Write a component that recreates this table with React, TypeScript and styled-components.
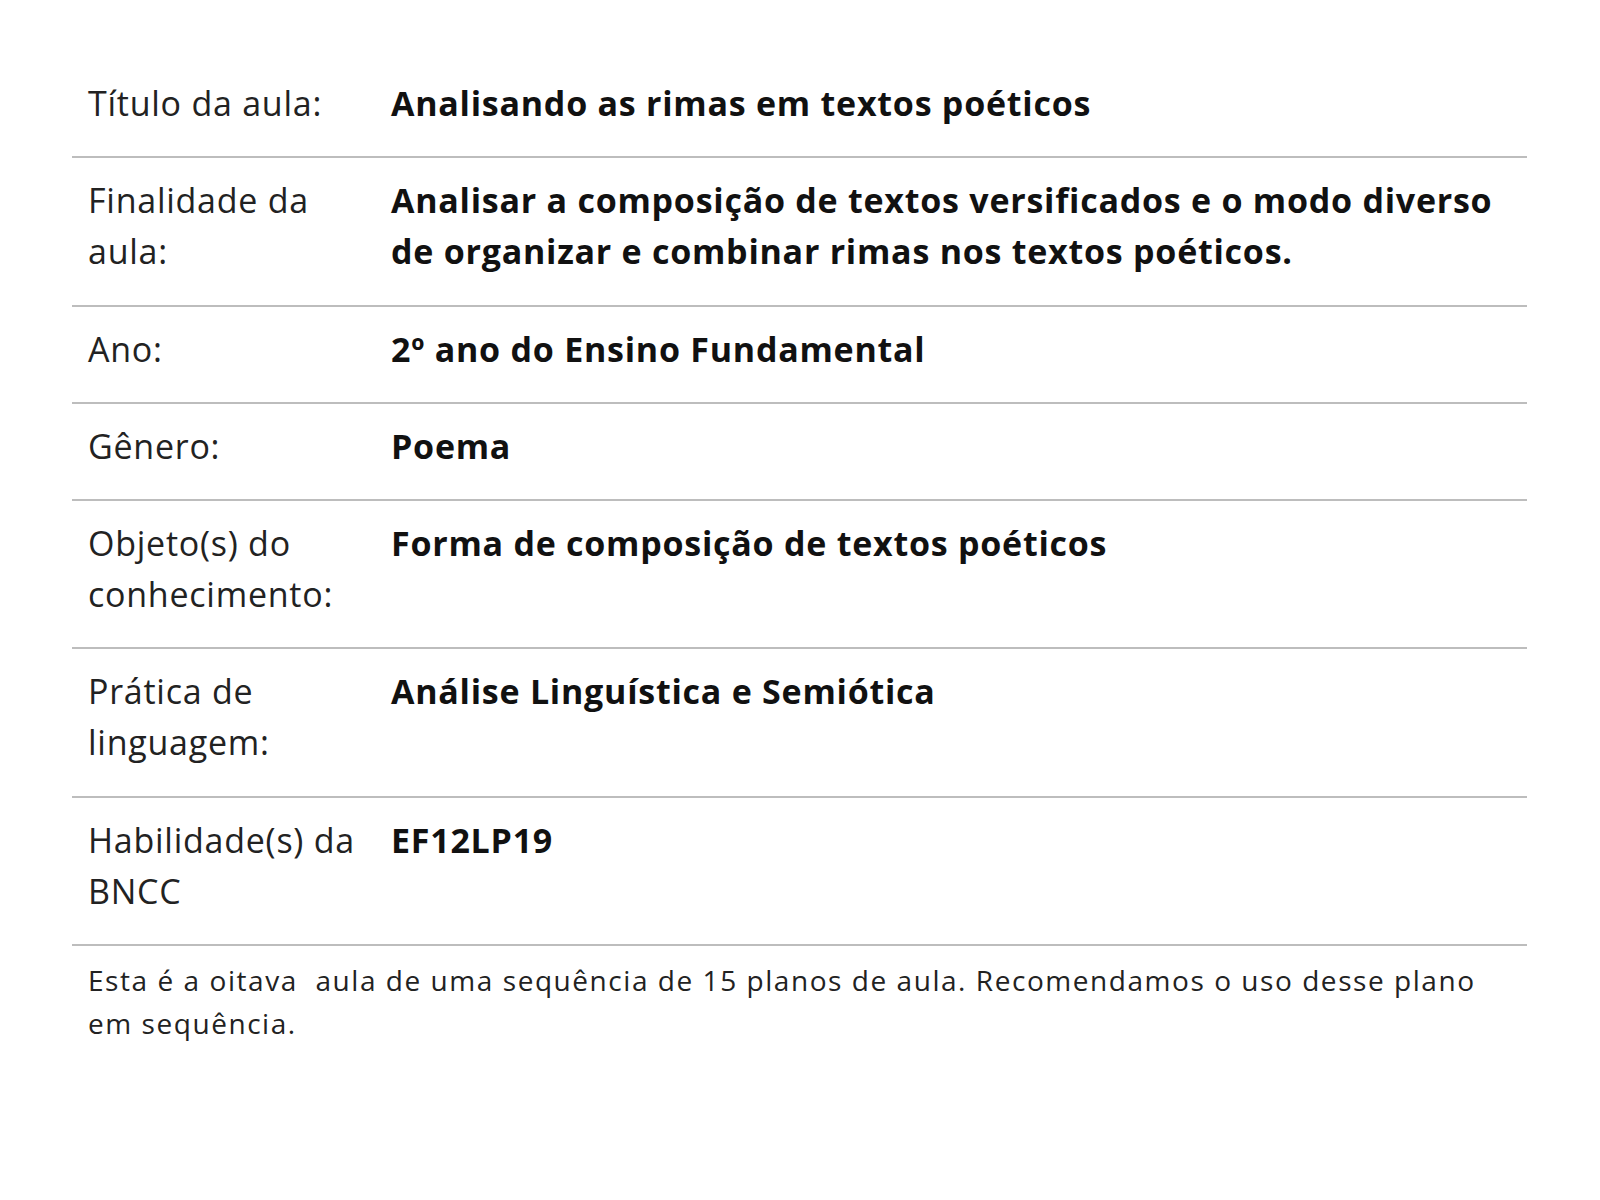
import styled, { createGlobalStyle } from 'styled-components'

const GlobalStyle = createGlobalStyle`
	body {
		margin: 0;
		background: #fff;
		font-family: "Open Sans", "Noto Sans", sans-serif;
		color: #1a1a1a;
	}
`

type Entry = {
	label: string;
	value: string;
}

const ENTRIES: Array<Entry> = [
	{ label: 'Título da aula:', value: 'Analisando as rimas em textos poéticos' },
	{ label: 'Finalidade da aula:', value: 'Analisar a composição de textos versificados e o modo diverso de organizar e combinar rimas nos textos poéticos.' },
	{ label: 'Ano:', value: '2º ano do Ensino Fundamental' },
	{ label: 'Gênero:', value: 'Poema' },
	{ label: 'Objeto(s) do conhecimento:', value: 'Forma de composição de textos poéticos' },
	{ label: 'Prática de linguagem:', value: 'Análise Linguística e Semiótica' },
	{ label: 'Habilidade(s) da BNCC', value: 'EF12LP19' },
]

function App() {
	return (
		<>
			<GlobalStyle />
			<Page>
				<Table>
					{ ENTRIES.map(entry => (
						<Row key={entry.label}>
							<Label>{ entry.label }</Label>
							<Value>{ entry.value }</Value>
						</Row>
					)) }
				</Table>
				<Note>
					Esta é a oitava{'\u00a0'} aula de uma sequência de 15 planos de aula. Recomendamos o uso desse plano em sequência.
				</Note>
			</Page>
		</>
	)
}

export default App

let Page = styled.main`
	padding: 61px 73px 80px 72px;
`

let Table = styled.div`
	display: flex;
	flex-direction: column;
`

let Row = styled.div`
	display: grid;
	grid-template-columns: 303px 1fr;
	padding: 17px 0 27.3px;
	border-bottom: 2px solid #bdbdbd;
	font-size: 34px;
	line-height: 51px;
	letter-spacing: 0.75px;
`

let Label = styled.div`
	padding: 0 16px;
	font-weight: 400;
	color: #222;
`

let Value = styled.div`
	padding: 0 16px;
	font-weight: 700;
	color: #111;
`

let Note = styled.p`
	margin: 0;
	padding: 13px 16px;
	font-size: 28px;
	line-height: 43px;
	letter-spacing: 1.55px;
	color: #222;
`
